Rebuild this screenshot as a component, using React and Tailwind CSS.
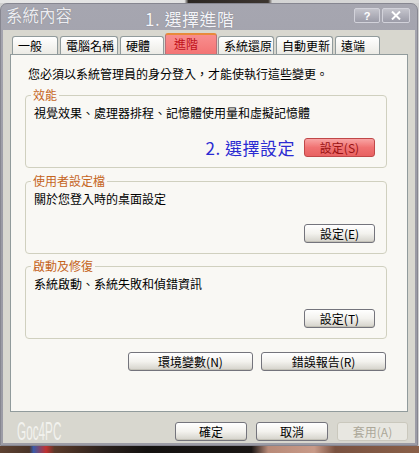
import React from "react";

function Btn({ children, className = "" }) {
  return (
    <div
      className={
        "h-[19px] flex items-center justify-center rounded-[3px] border border-[#74747c] bg-linear-to-b from-[#ffffff] via-[#f3f2ee] to-[#d4d2ca] text-[12px] leading-[16px] text-black shadow-[inset_0_-1px_0_#c4c2b8] " +
        className
      }
    >
      {children}
    </div>
  );
}

function Group({ label, text, children }) {
  return (
    <fieldset className="border border-[#d0d0bf] rounded-[4px] px-[8px] pt-[2px] pb-[10px] min-w-0">
      <legend className="-ml-[3px] px-[2px] text-[12px] leading-[16px] text-[#c5651e]">{label}</legend>
      <div className="text-[12px] leading-[16px] text-black whitespace-nowrap">{text}</div>
      <div className="mt-[17px] flex justify-end items-center h-[19px] pr-[3px]">{children}</div>
    </fieldset>
  );
}

function Tab({ children, className = "" }) {
  return (
    <div
      className={
        "h-[18px] shrink-0 flex items-center pl-[5px] rounded-t-[3px] border border-b-0 border-[#919b9c] bg-linear-to-b from-[#ffffff] to-[#ecebe5] text-[12px] leading-[16px] text-black whitespace-nowrap " +
        className
      }
    >
      {children}
    </div>
  );
}

export default function App() {
  return (
    <div className="w-[419px] h-[453px] flex flex-col overflow-hidden bg-[#cfcfcf] font-['Noto_Sans_CJK_TC',sans-serif]">
      <div className="h-[3px] shrink-0 bg-[linear-gradient(90deg,#e6e6e6_0%,#e2e2e2_44%,#2b2622_45%,#3c3530_64%,#d4d4d4_65%,#d8d8d8_100%)]" />
      <div className="w-[418px] h-[443px] shrink-0 flex flex-col rounded-t-[7px] bg-linear-to-b from-[#a6a6b0] via-[#9a9aa4] to-[#9c9ca6] border border-[#868690]">
        {/* title bar */}
        <div className="h-[26px] shrink-0 flex items-start">
          <div className="ml-[5px] mt-[0px] text-[16.5px] leading-[22px] text-[#ececf0] [text-shadow:0_0_1px_#70707a] whitespace-nowrap">
            系統內容
          </div>
          <div className="ml-[73px] mt-[4px] text-[17px] leading-[22px] tracking-[0.5px] text-[#f4f4f8] [text-shadow:0_0_1px_#70707a] whitespace-nowrap">
            1. 選擇進階
          </div>
          <div className="ml-auto mt-[4px] flex gap-[2px] mr-[7px]">
            <div className="w-[26px] h-[15px] rounded-[2px] border border-[#d2d2da] bg-linear-to-b from-[#c4c4cc] to-[#9c9ca8] flex items-center justify-center text-[11px] leading-[12px] font-bold text-white font-['Liberation_Sans',sans-serif]">
              ?
            </div>
            <div className="w-[28px] h-[15px] rounded-[2px] border border-[#d2d2da] bg-linear-to-b from-[#c4c4cc] to-[#9c9ca8] flex items-center justify-center">
              <svg width="10" height="9" viewBox="0 0 10 9">
                <path d="M1 0.5 L9 8.5 M9 0.5 L1 8.5" stroke="#ffffff" strokeWidth="2" />
              </svg>
            </div>
          </div>
        </div>

        {/* body */}
        <div className="flex-1 mx-[2px] mb-[2px] bg-[#d8d7cf] flex flex-col pt-[3px] px-[7px]">
          <div className="h-[21px] flex items-end pl-[2px] gap-[2px]">
            <Tab className="w-[46px]">一般</Tab>
            <Tab className="w-[58px]">電腦名稱</Tab>
            <Tab className="w-[44px]">硬體</Tab>
            <div className="h-[21px] w-[52px] -mx-[1px] shrink-0 flex items-start pt-[1px] pl-[8px] rounded-t-[3px] border border-b-0 border-t-2 border-[#e88a3a] border-x-[#b8707a] bg-linear-to-b from-[#f88e8e] to-[#f37474] text-[12px] leading-[16px] text-[#c0101a] whitespace-nowrap">
              進階
            </div>
            <Tab className="w-[56px] pl-[4px]">系統還原</Tab>
            <Tab className="w-[57px] pl-[4px]">自動更新</Tab>
            <Tab className="w-[45px]">遠端</Tab>
          </div>

          <div className="h-[358px] shrink-0 border border-[#919b9c] bg-[#f9f8f4] pt-[11px] pl-[14px] pr-[20px] flex flex-col">
            <div className="ml-[3px] text-[12px] leading-[16px] text-black whitespace-nowrap">
              您必須以系統管理員的身分登入，才能使執行這些變更。
            </div>

            <div className="mt-[5px]">
              <Group label="效能" text="視覺效果、處理器排程、記憶體使用量和虛擬記憶體">
                <div className="mr-[9px] text-[17px] leading-[20px] tracking-[0.5px] text-[#2b2bd2] whitespace-nowrap">
                  2. 選擇設定
                </div>
                <div className="w-[71px] h-[19px] flex items-center justify-center rounded-[3px] border border-[#c04848] bg-linear-to-b from-[#f8a4a4] via-[#f07272] to-[#e86262] text-[12px] leading-[16px] text-[#9a1212]">
                  設定(S)
                </div>
              </Group>
            </div>

            <div className="mt-[5px]">
              <Group label="使用者設定檔" text="關於您登入時的桌面設定">
                <Btn className="w-[71px]">設定(E)</Btn>
              </Group>
            </div>

            <div className="mt-[4px]">
              <Group label="啟動及修復" text="系統啟動、系統失敗和偵錯資訊">
                <Btn className="w-[71px]">設定(T)</Btn>
              </Group>
            </div>

            <div className="mt-[13px] flex justify-end gap-[8px] mr-[1px]">
              <Btn className="w-[125px]">環境變數(N)</Btn>
              <Btn className="w-[125px]">錯誤報告(R)</Btn>
            </div>
          </div>

          <div className="mt-[10px] flex items-center h-[19px]">
            <div className="ml-[7px] origin-left scale-x-[0.47] text-[25px] leading-[19px] text-[#f2f2ee] font-['Liberation_Sans',sans-serif] whitespace-nowrap">
              Goc4PC
            </div>
            <div className="ml-auto flex gap-[9px]">
              <Btn className="w-[72px]">確定</Btn>
              <Btn className="w-[72px]">取消</Btn>
              <div className="w-[71px] h-[19px] flex items-center justify-center rounded-[3px] border border-[#cac8bd] bg-[#e8e7e1] text-[12px] leading-[16px] text-[#aca899]">
                套用(A)
              </div>
            </div>
          </div>
        </div>
      </div>
      <div className="flex-1 bg-[linear-gradient(90deg,#5e4232_0%,#4a3428_7%,#3a5aa8_8%,#c03030_11%,#5a3a2a_13%,#2a201c_25%,#141210_35%,#1a1614_60%,#b88a78_64%,#c89a88_75%,#7a5240_80%,#8a6048_100%)]" />
    </div>
  );
}
